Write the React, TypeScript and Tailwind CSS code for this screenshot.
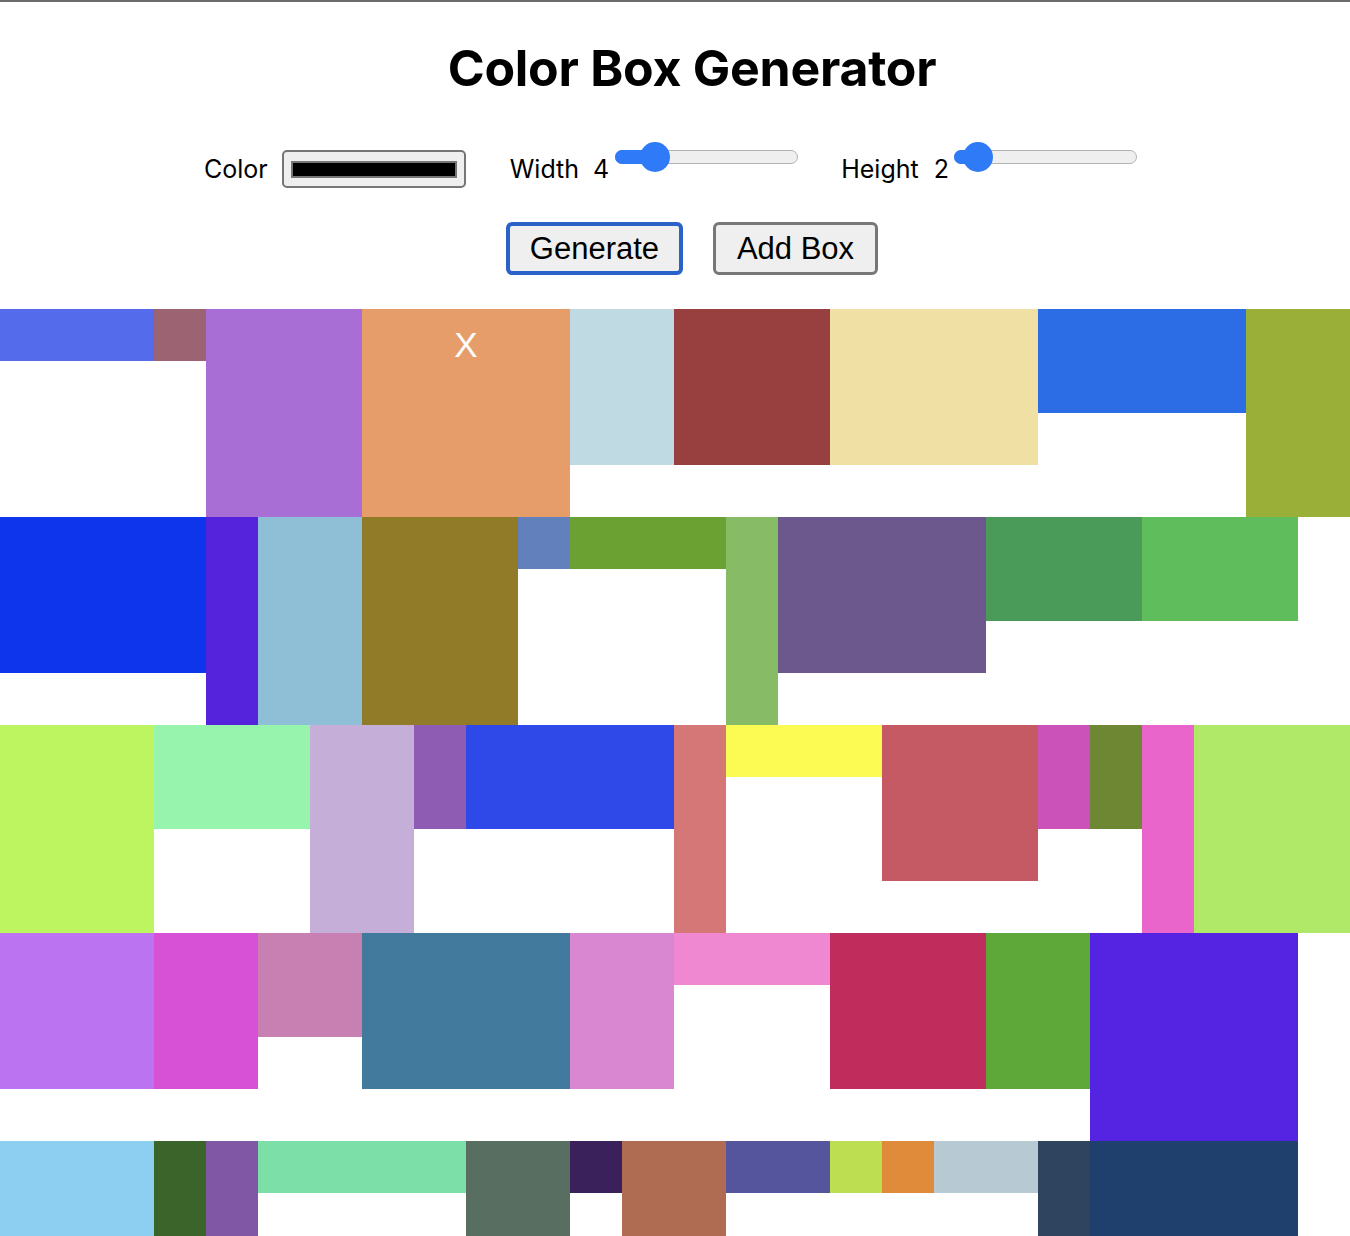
import React from "react";

type Box = { w: number; h: number; c: string; x?: boolean };

const U = 52;

const boxes: Box[] = [
  // row 1
  { w: 3, h: 1, c: "#546ceb" },
  { w: 1, h: 1, c: "#9c6372" },
  { w: 3, h: 4, c: "#a86ed6" },
  { w: 4, h: 4, c: "#e69d69", x: true },
  { w: 2, h: 3, c: "#bfdae3" },
  { w: 3, h: 3, c: "#984040" },
  { w: 4, h: 3, c: "#f1e0a3" },
  { w: 4, h: 2, c: "#2c6de5" },
  { w: 2, h: 4, c: "#9aaf38" },
  // row 2
  { w: 4, h: 3, c: "#0e34ec" },
  { w: 1, h: 4, c: "#5523dc" },
  { w: 2, h: 4, c: "#8ebfd7" },
  { w: 3, h: 4, c: "#917b29" },
  { w: 1, h: 1, c: "#6280bc" },
  { w: 3, h: 1, c: "#6ba033" },
  { w: 1, h: 4, c: "#88bb65" },
  { w: 4, h: 3, c: "#6d588e" },
  { w: 3, h: 2, c: "#4a9b59" },
  { w: 3, h: 2, c: "#5fbe5b" },
  // row 3
  { w: 3, h: 4, c: "#bdf561" },
  { w: 3, h: 2, c: "#96f4ad" },
  { w: 2, h: 4, c: "#c5aed7" },
  { w: 1, h: 2, c: "#8f5cb4" },
  { w: 4, h: 2, c: "#2f48e8" },
  { w: 1, h: 4, c: "#d57677" },
  { w: 3, h: 1, c: "#fcfb53" },
  { w: 3, h: 3, c: "#c55964" },
  { w: 1, h: 2, c: "#cb52b9" },
  { w: 1, h: 2, c: "#6e8732" },
  { w: 1, h: 4, c: "#e965cb" },
  { w: 3, h: 4, c: "#b0e868" },
  // row 4
  { w: 3, h: 3, c: "#bc73f2" },
  { w: 2, h: 3, c: "#d651d6" },
  { w: 2, h: 2, c: "#c880b3" },
  { w: 4, h: 3, c: "#417a9c" },
  { w: 2, h: 3, c: "#da87d1" },
  { w: 3, h: 1, c: "#ef88d1" },
  { w: 3, h: 3, c: "#c02d5d" },
  { w: 2, h: 3, c: "#5da838" },
  { w: 4, h: 4, c: "#5523e2" },
  // row 5
  { w: 3, h: 3, c: "#8ccff0" },
  { w: 1, h: 3, c: "#3a6429" },
  { w: 1, h: 2, c: "#7f57a4" },
  { w: 4, h: 1, c: "#7cdfa8" },
  { w: 2, h: 3, c: "#576e60" },
  { w: 1, h: 1, c: "#3a215b" },
  { w: 2, h: 2, c: "#b06c52" },
  { w: 2, h: 1, c: "#54559d" },
  { w: 1, h: 1, c: "#bede52" },
  { w: 1, h: 1, c: "#e08b3a" },
  { w: 2, h: 1, c: "#b7c9d2" },
  { w: 1, h: 2, c: "#2f445e" },
  { w: 4, h: 2, c: "#1f3f6c" },
];

function Slider({ thumbLeft }: { thumbLeft: number }) {
  return (
    <div className="relative w-[183px] h-[30px]">
      <div className="absolute left-0 right-0 top-[8px] h-[14px] rounded-full bg-[#efefef] border border-[#b3b3b3]" />
      <div
        className="absolute left-0 top-[8px] h-[14px] rounded-full bg-[#2f7af6]"
        style={{ width: thumbLeft + 15 }}
      />
      <div
        className="absolute top-0 w-[30px] h-[30px] rounded-full bg-[#2f7af6]"
        style={{ left: thumbLeft }}
      />
    </div>
  );
}

export default function App() {
  return (
    <div className="w-full overflow-hidden bg-white border-t-2 border-[#6b6b6b]">
      <div className="flex justify-center pl-[34px] pt-[36px]">
        <h1 className="font-['Inter',sans-serif] font-bold text-[50px] leading-[60px] tracking-[-0.25px] text-black">
          Color Box Generator
        </h1>
      </div>

      <div className="flex items-start pl-[204px] mt-[44px] h-[46px] font-['Inter',sans-serif] text-[25px] text-black">
        <span className="mt-[12px] leading-[30px]">Color</span>
        <div className="ml-[14px] mt-[8px] w-[184px] h-[38px] rounded-[5px] border-2 border-[#767676] bg-[#efefef] flex items-center justify-center">
          <div className="w-[166px] h-[17px] border-2 border-[#767676] bg-black" />
        </div>
        <span className="ml-[44px] mt-[12px] leading-[30px]">Width</span>
        <span className="ml-[14px] mt-[12px] leading-[30px]">4</span>
        <div className="ml-[6px]">
          <Slider thumbLeft={25} />
        </div>
        <span className="ml-[43px] mt-[12px] leading-[30px]">Height</span>
        <span className="ml-[15px] mt-[12px] leading-[30px]">2</span>
        <div className="ml-[5px]">
          <Slider thumbLeft={9} />
        </div>
      </div>

      <div className="flex justify-center gap-[30px] pl-[34px] mt-[34px] font-['Liberation_Sans',Arial,sans-serif] text-[31px] text-black">
        <button className="w-[177px] h-[53px] rounded-[6px] border-4 border-[#2a62c9] bg-[#efefef] leading-none">
          Generate
        </button>
        <button className="w-[165px] h-[53px] rounded-[6px] border-[3px] border-[#777777] bg-[#efefef] leading-none">
          Add Box
        </button>
      </div>

      <div className="mt-[34px] -ml-[2px] w-[1352px] flex flex-wrap items-start">
        {boxes.map((b, i) => (
          <div
            key={i}
            className="shrink-0 flex justify-center"
            style={{ width: b.w * U, height: b.h * U, backgroundColor: b.c }}
          >
            {b.x && (
              <span className="pt-[16px] font-['Liberation_Sans',Arial,sans-serif] text-[35px] leading-[40px] text-white">
                X
              </span>
            )}
          </div>
        ))}
      </div>
    </div>
  );
}
